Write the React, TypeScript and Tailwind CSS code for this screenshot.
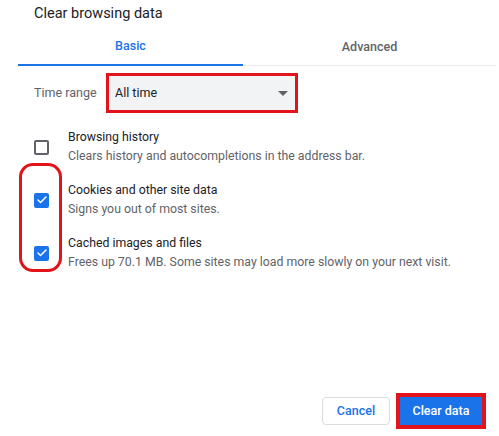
import { Check } from 'lucide-react';

const rows = [
  { label: 'Browsing history', desc: 'Clears history and autocompletions in the address bar.', checked: false },
  { label: 'Cookies and other site data', desc: 'Signs you out of most sites.', checked: true },
  { label: 'Cached images and files', desc: 'Frees up 70.1 MB. Some sites may load more slowly on your next visit.', checked: true },
];

export default function App() {
  return (
    <div className="relative flex h-[436px] w-[499px] flex-col overflow-hidden bg-white font-['Roboto','Liberation_Sans',sans-serif]">
      <h1 className="mt-[4px] pl-[34px] text-[14.5px] leading-[20px] text-[#202124]">Clear browsing data</h1>

      <div className="mt-[4px] ml-[18px] mr-[3px] flex items-end">
        <div className="flex h-[38px] w-[225px] items-center justify-center border-b-2 border-[#1a73e8] text-[12.5px] font-medium text-[#1a73e8]">
          Basic
        </div>
        <div className="flex h-[37px] flex-1 items-center justify-center border-b border-[#e8eaed] text-[12.5px] font-medium text-[#5f6368]">
          Advanced
        </div>
      </div>

      <div className="mt-[7px] flex items-center pl-[34px]">
        <span className="w-[72px] text-[12.5px] text-[#5f6368]">Time range</span>
        <div className="flex h-[40px] w-[192px] items-center justify-between border-[3px] border-[#e3131b] bg-[#f1f3f4] pl-[6px] pr-[7px]">
          <span className="text-[12.5px] text-[#202124]">All time</span>
          <svg width="10" height="5" viewBox="0 0 10 5">
            <path d="M0 0 L10 0 L5 5 Z" fill="#5f6368" />
          </svg>
        </div>
      </div>

      <div className="mt-[15px] flex flex-col gap-[15px] pl-[34px]">
        {rows.map(r => (
          <div key={r.label} className="flex items-center gap-[19px]">
            {r.checked ? (
              <div className="flex h-[15px] w-[15px] items-center justify-center rounded-[2px] bg-[#1a73e8]">
                <Check size={12} strokeWidth={3} color="white" />
              </div>
            ) : (
              <div className="h-[15px] w-[15px] rounded-[2px] border-2 border-[#5f6368]" />
            )}
            <div className="text-[12.3px] leading-[19px]">
              <p className="text-[#202124]">{r.label}</p>
              <p className="text-[#5f6368]">{r.desc}</p>
            </div>
          </div>
        ))}
      </div>

      <div className="absolute left-[19px] top-[163px] h-[109px] w-[43px] rounded-[14px] border-[3px] border-[#e3131b]" />

      <div className="flex-1" />

      <div className="mb-[7px] mr-[13px] flex items-center justify-end gap-[6px]">
        <button className="h-[28px] w-[68px] rounded-[4px] border border-[#dadce0] bg-white text-[12.5px] font-medium text-[#1a73e8]">
          Cancel
        </button>
        <div className="border-[4px] border-[#e3131b]">
          <button className="block h-[28px] w-[82px] bg-[#1a73e8] text-[12.5px] font-medium text-white">
            Clear data
          </button>
        </div>
      </div>
    </div>
  );
}
